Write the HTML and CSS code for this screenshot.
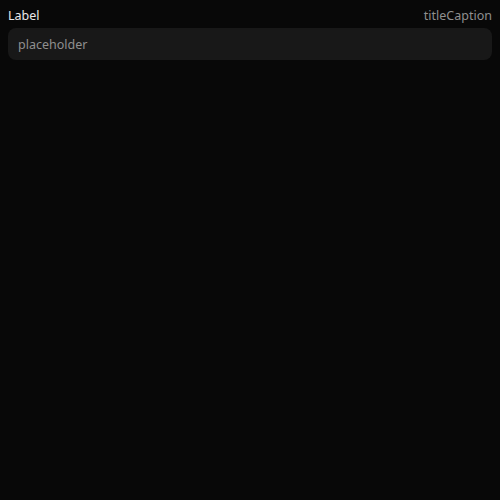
FILE: index.html
```html
<!DOCTYPE html>
<html>
<head>
<meta charset="utf-8">
<link rel="stylesheet" href="styles.css">
</head>
<body>
<div class="field">
  <div class="field-head">
    <span class="label">Label</span>
    <span class="caption">titleCaption</span>
  </div>
  <input class="input" type="text" placeholder="placeholder">
</div>
</body>
</html>
```
FILE: styles.css
```css
html, body {
  margin: 0;
  background: #080808;
}
body {
  padding: 6px 8px;
  font-family: "Noto Sans", "Open Sans", sans-serif;
}
.field {
  display: flex;
  flex-direction: column;
  gap: 4px;
}
.field-head {
  display: flex;
  justify-content: space-between;
  align-items: center;
  height: 18px;
}
.label {
  font-size: 12.5px;
  color: #e8e8e8;
}
.caption {
  font-size: 12.5px;
  color: #8f8f8f;
}
.input {
  box-sizing: border-box;
  height: 32px;
  width: 100%;
  border: none;
  outline: none;
  border-radius: 8px;
  background: #181818;
  padding: 0 10px;
  font-family: "Noto Sans", "Open Sans", sans-serif;
  font-size: 12.5px;
  color: #e8e8e8;
}
.input::placeholder {
  color: #8f8f8f;
}
```
